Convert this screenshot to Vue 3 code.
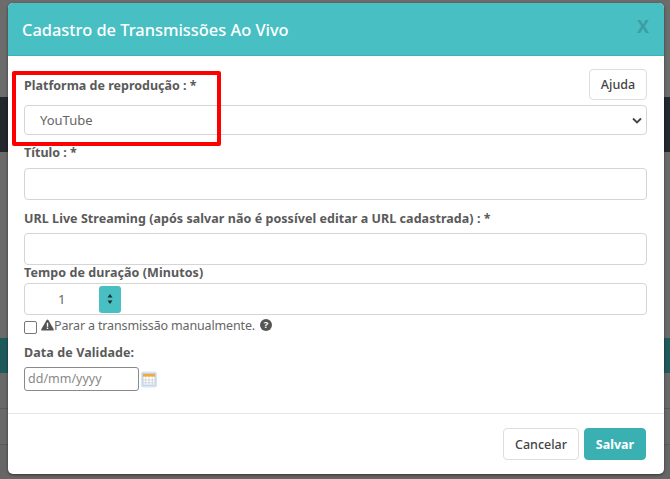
<script setup>
const bgBands = [
  { cls: 'b-top' }, { cls: 'b-dark' }, { cls: 'b-mid' }, { cls: 'b-teal' }, { cls: 'b-row' }, { cls: 'b-row' }, { cls: 'b-end' }
]
</script>

<template>
  <div class="page">
    <div v-for="(b, i) in bgBands" :key="i" :class="b.cls"></div>
    <div class="modal">
      <header class="head">
        <h1>Cadastro de Transmissões Ao Vivo</h1>
        <span class="close">X</span>
      </header>
      <div class="body">
        <div class="first-row">
          <label class="lab">Platforma de reprodução : *</label>
          <button class="btn help">Ajuda</button>
        </div>
        <div class="ctl sel">
          <span>YouTube</span>
          <svg width="10" height="7" viewBox="0 0 10 7"><path d="M1 1.5l4 4 4-4" fill="none" stroke="#444" stroke-width="1.8"/></svg>
        </div>
        <label class="lab l2">Título : *</label>
        <div class="ctl c2"></div>
        <label class="lab l3">URL Live Streaming (após salvar não é possível editar a URL cadastrada) : *</label>
        <div class="ctl c3"></div>
        <label class="lab l4">Tempo de duração (Minutos)</label>
        <div class="ctl num">
          <span class="val">1</span>
          <span class="spin">
            <svg width="6" height="12" viewBox="0 0 6 12"><path d="M3 1l2.5 3.4h-5zM3 11L.5 7.6h5z" fill="#1d2b2b"/></svg>
          </span>
        </div>
        <div class="check">
          <span class="box"></span>
          <svg class="warn" width="13" height="12" viewBox="0 0 13 12"><path d="M6.5.5c.4 0 .7.2.9.5l5.3 9.2c.4.7-.1 1.4-.9 1.4H1.2c-.8 0-1.3-.7-.9-1.4L5.6 1c.2-.3.5-.5.9-.5z" fill="#555"/><rect x="5.8" y="3.8" width="1.4" height="4" fill="#fff"/><rect x="5.8" y="8.6" width="1.4" height="1.4" fill="#fff"/></svg>
          <span class="ctxt">Parar a transmissão manualmente.</span>
          <span class="q">?</span>
        </div>
        <label class="lab l5">Data de Validade:</label>
        <div class="date-row">
          <div class="date">dd/mm/yyyy</div>
          <svg width="16" height="17" viewBox="0 0 17 17">
            <rect x="0" y="0" width="17" height="17" rx="2" fill="#d6e6f5"/>
            <rect x="2" y="2.5" width="13" height="12" fill="#fff" stroke="#bcd"/>
            <rect x="2" y="2.5" width="13" height="3" fill="#f0a93c"/>
            <path d="M5 6v8M8.5 6v8M12 6v8M2 9h13M2 12h13" stroke="#b9c6d3" stroke-width=".7"/>
          </svg>
        </div>
      </div>
      <footer class="foot">
        <button class="btn cancel">Cancelar</button>
        <button class="btn save">Salvar</button>
      </footer>
    </div>
    <div class="mark"></div>
  </div>
</template>

<style scoped>
.page { position: relative; width: 670px; height: 479px; overflow: hidden; background: #6a6a6a; font-family: "Noto Sans", "Open Sans", sans-serif; color: #555; }
.b-top { height: 97px; background: #6c6c6c; }
.b-dark { height: 55px; background: #23282d; }
.b-mid { height: 186px; background: #6a6a6a; }
.b-teal { height: 35px; background: #1f5a5b; }
.b-row { height: 35px; background: #696969; border-bottom: 1px solid #5a5a5a; box-sizing: content-box; }
.b-end { height: 34px; background: #666; }
.modal { position: absolute; left: 8px; top: 3px; width: 656px; height: 471px; background: #fff; border-radius: 5px; display: flex; flex-direction: column; box-shadow: 0 1px 3px rgba(0,0,0,.5); }
.head { height: 53px; box-sizing: border-box; background: #48c0c3; border-bottom: 1px solid #3fb2b5; border-radius: 5px 5px 0 0; padding: 0 14px; display: flex; align-items: center; justify-content: space-between; }
h1 { margin: 0; font-size: 16.4px; font-weight: 500; color: #fff; }
.close { font-size: 18px; font-weight: 700; color: #3a9fa2; position: relative; top: -3px; right: 1px; }
.body { flex: 1; padding: 13px 17px 0 16px; display: flex; flex-direction: column; align-items: stretch; }
.first-row { display: flex; justify-content: space-between; align-items: flex-start; height: 33px; }
.lab { display: block; font-size: 12.5px; font-weight: 700; color: #5a5a5a; line-height: 18px; }
.first-row .lab { margin-top: 8px; }
.btn { font-family: inherit; border-radius: 4px; font-size: 12.5px; cursor: pointer; }
.help { width: 58px; height: 31px; background: #fff; border: 1px solid #ddd; color: #444; font-weight: 500; padding: 0; }
.ctl { box-sizing: border-box; border: 1px solid #d5d5d5; border-radius: 4px; background: #fff; }
.sel { height: 30px; margin-top: 3px; display: flex; align-items: center; justify-content: space-between; padding: 0 4px 0 15px; font-size: 13px; color: #666; }
.l2 { margin-top: 9px; }
.c2 { height: 32px; margin-top: 6px; }
.l3 { margin-top: 10px; letter-spacing: 0.05px; }
.c3 { height: 32px; margin-top: 5px; }
.l4 { margin-top: -1px; letter-spacing: 0.08px; }
.num { height: 32px; margin-top: 1px; display: flex; align-items: center; font-size: 13px; color: #666; }
.val { margin-left: 33px; width: 41px; }
.spin { width: 22px; height: 27px; background: #48c0c3; border-radius: 3px; display: flex; align-items: center; justify-content: center; }
.check { display: flex; align-items: center; height: 18px; margin-top: 1px; font-size: 12.5px; color: #666; }
.box { width: 11px; height: 11px; border: 1px solid #777; border-radius: 2px; margin-top: 4px; background: #fff; }
.warn { margin-left: 4px; }
.ctxt { letter-spacing: -0.15px; }
.q { margin-left: 5px; width: 12px; height: 12px; border-radius: 50%; background: #555; color: #fff; font-size: 9.5px; font-weight: 700; line-height: 12px; text-align: center; }
.l5 { margin-top: 10px; letter-spacing: 0.1px; }
.date-row { display: flex; align-items: center; gap: 2px; margin-top: 5px; }
.date { box-sizing: border-box; width: 115px; height: 24px; border: 1px solid #8a8a8a; border-radius: 3px; font-size: 12.5px; color: #888; padding-left: 3px; line-height: 22px; }
.foot { height: 61px; box-sizing: border-box; border-top: 1px solid #e6e6e6; display: flex; justify-content: flex-end; align-items: flex-start; gap: 5px; padding: 14px 18px 0 0; }
.cancel { width: 76px; height: 32px; background: #fff; border: 1px solid #ddd; color: #444; font-weight: 500; padding: 0; }
.save { width: 62px; height: 32px; background: #3ab0b3; border: 1px solid #3ab0b3; color: #fff; font-weight: 700; padding: 0; }
.mark { position: absolute; left: 12px; top: 71px; width: 209px; height: 75px; box-sizing: border-box; border: 4px solid #f00; border-radius: 2px; pointer-events: none; }
</style>
